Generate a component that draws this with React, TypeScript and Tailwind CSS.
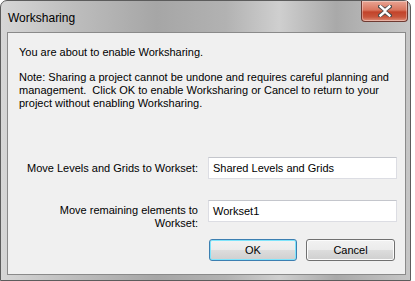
import React from "react";

const font = { fontFamily: '"Liberation Sans", Arial, sans-serif' };

function CloseButton() {
  return (
    <div className="mr-[2px] flex h-[21px] w-[47px] items-center justify-center rounded-b-[4px] border border-t-0 border-[#6e3a32] bg-[linear-gradient(to_bottom,#e8a493_0%,#d9765f_45%,#c2432a_55%,#c8563c_80%,#e0907a_100%)] shadow-[inset_0_0_0_1px_rgba(255,255,255,0.35)]">
      <svg width="14" height="12" viewBox="0 0 14 12">
        <path
          d="M2 1.5 L7 5 L12 1.5 M2 10.5 L7 7 L12 10.5"
          fill="none"
          stroke="#4a4a4a"
          strokeWidth="4"
          strokeLinecap="square"
        />
        <path
          d="M2.5 1.5 L7 5.5 L11.5 1.5 M2.5 10.5 L7 6.5 L11.5 10.5"
          fill="none"
          stroke="#ffffff"
          strokeWidth="2.4"
          strokeLinecap="square"
        />
      </svg>
    </div>
  );
}

function Field({ value }: { value: string }) {
  return (
    <div className="flex h-[22px] w-[189px] items-center border border-[#dcdde3] border-t-[#c4c6cc] bg-white pl-[4px] text-[11px] text-black">
      {value}
    </div>
  );
}

function Button({ label, primary }: { label: string; primary?: boolean }) {
  return (
    <div
      className={`flex h-[22px] items-center justify-center rounded-[3px] border text-[11px] text-black ${
        primary
          ? "w-[88px] border-[#3c7fb1] shadow-[inset_0_0_0_1px_#7fe4fb]"
          : "w-[89px] border-[#707070] shadow-[inset_0_0_0_1px_#fcfcfc]"
      } bg-[linear-gradient(to_bottom,#f2f2f2_0%,#ebebeb_50%,#dddddd_51%,#cfcfcf_100%)]`}
    >
      {label}
    </div>
  );
}

export default function App() {
  return (
    <div className="h-[281px] w-[415px] overflow-hidden bg-white" style={font}>
      <div className="flex h-[281px] w-[411px] flex-col rounded-t-[7px] border border-[#5c5c5c] bg-[linear-gradient(to_right,#d6d6d6_0%,#bdbdbd_18%,#a6a6a6_38%,#b2b2b2_55%,#cfcfcf_68%,#a9a9a9_82%,#c6c6c6_100%)]">
        {/* title bar */}
        <div className="flex h-[31px] items-start justify-between">
          <div className="pl-[7px] pt-[9px] text-[12px] leading-[16px] text-black">
            Worksharing
          </div>
          <CloseButton />
        </div>

        {/* client area */}
        <div className="ml-[6px] h-[243px] w-[399px] border border-[#8a8a8a] bg-[#f0f0f0] text-[11px] leading-[13px] text-black">
          <div className="pl-[11px] pt-[13px] whitespace-nowrap">
            <p>You are about to enable Worksharing.</p>
            <p className="mt-[12px]">
              Note: Sharing a project cannot be undone and requires careful planning and
              <br />
              management.&nbsp; Click OK to enable Worksharing or Cancel to return to your
              <br />
              project without enabling Worksharing.
            </p>
          </div>

          <div className="mt-[47px] flex items-center">
            <div className="w-[190px] text-right">Move Levels and Grids to Workset:</div>
            <div className="ml-[10px]">
              <Field value="Shared Levels and Grids" />
            </div>
          </div>

          <div className="mt-[21px] flex items-start">
            <div className="mt-[4px] w-[190px] text-right">
              Move remaining elements to
              <br />
              Workset:
            </div>
            <div className="ml-[10px]">
              <Field value="Workset1" />
            </div>
          </div>

          <div className="mt-[9px] flex gap-[9px] pl-[201px]">
            <Button label="OK" primary />
            <Button label="Cancel" />
          </div>
        </div>
      </div>
    </div>
  );
}
